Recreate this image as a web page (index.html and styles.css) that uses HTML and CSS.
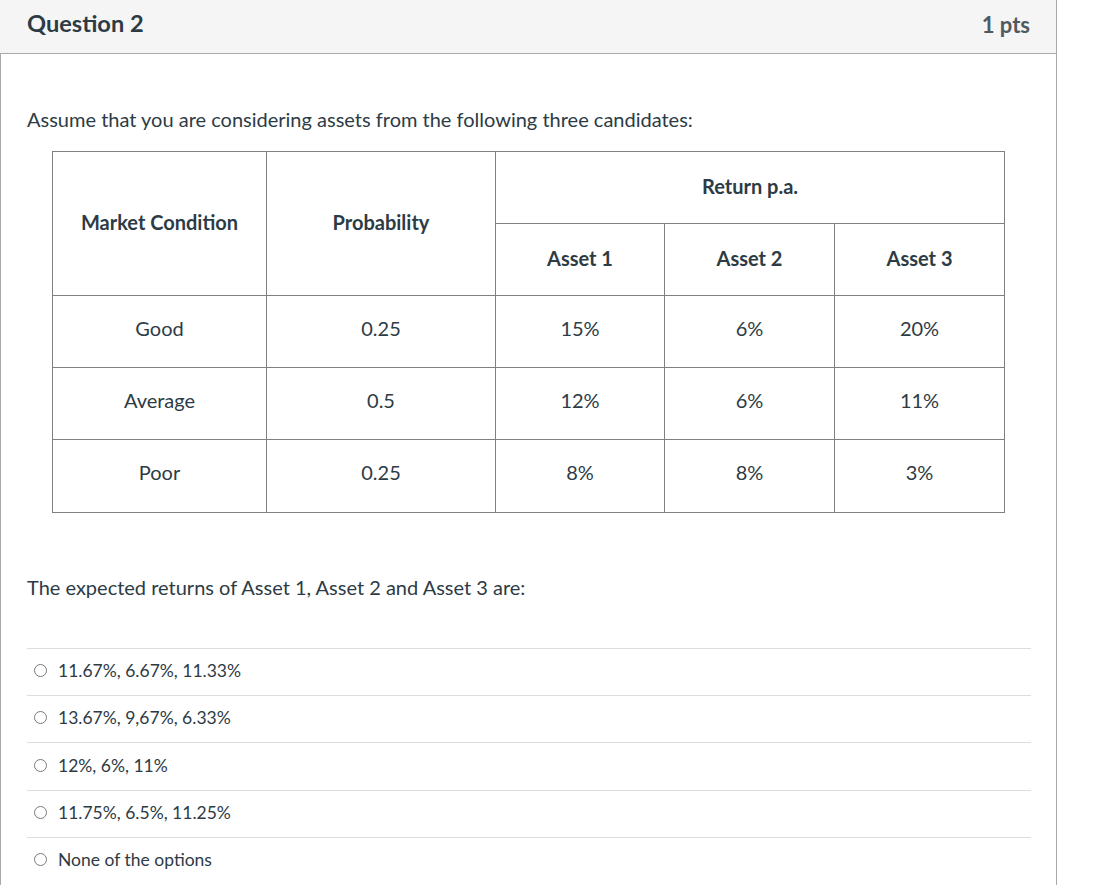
FILE: index.html
```html
<!DOCTYPE html>
<html>
<head>
<meta charset="utf-8">
<link rel="stylesheet" href="styles.css">
</head>
<body>
<div class="question">
  <div class="q-header">
    <span class="q-title">Question 2</span>
    <span class="q-pts">1 pts</span>
  </div>
  <div class="q-body">
    <p class="q-text">Assume that you are considering assets from the following three candidates:</p>
    <table class="data">
      <colgroup>
        <col class="c1"><col class="c2"><col class="c3"><col class="c4"><col class="c5">
      </colgroup>
      <tr>
        <th rowspan="2">Market Condition</th>
        <th rowspan="2">Probability</th>
        <th colspan="3">Return p.a.</th>
      </tr>
      <tr>
        <th>Asset 1</th><th>Asset 2</th><th>Asset 3</th>
      </tr>
      <tr><td>Good</td><td>0.25</td><td>15%</td><td>6%</td><td>20%</td></tr>
      <tr><td>Average</td><td>0.5</td><td>12%</td><td>6%</td><td>11%</td></tr>
      <tr class="last"><td>Poor</td><td>0.25</td><td>8%</td><td>8%</td><td>3%</td></tr>
    </table>
    <p class="q-text q-prompt">The expected returns of Asset 1, Asset 2 and Asset 3 are:</p>
    <div class="answers">
      <div class="answer"><span class="radio"></span><span>11.67%, 6.67%, 11.33%</span></div>
      <div class="answer"><span class="radio"></span><span>13.67%, 9,67%, 6.33%</span></div>
      <div class="answer tall"><span class="radio"></span><span>12%, 6%, 11%</span></div>
      <div class="answer"><span class="radio"></span><span>11.75%, 6.5%, 11.25%</span></div>
      <div class="answer"><span class="radio"></span><span>None of the options</span></div>
    </div>
  </div>
</div>
</body>
</html>
```

FILE: styles.css
```css
html, body {
  margin: 0;
  padding: 0;
  background: #ffffff;
}
body {
  font-family: Lato, "Liberation Sans", sans-serif;
  color: #2d3b45;
}
.question {
  width: 1056px;
  border-right: 1px solid #aaaaaa;
  min-height: 885px;
}
.q-header {
  height: 53px;
  background: #f5f5f5;
  border-bottom: 1px solid #aaaaaa;
  display: flex;
  align-items: center;
  justify-content: space-between;
  padding: 0 26px 0 27px;
  box-sizing: content-box;
}
.q-title {
  font-size: 23.6px;
  font-weight: 700;
  color: #2d3b45;
  margin-bottom: 7px;
}
.q-pts {
  font-size: 22px;
  font-weight: 700;
  color: #4f5a61;
  margin-bottom: 4px;
}
.q-body {
  border-left: 1px solid #aaaaaa;
  padding: 0 25px 0 26px;
  min-height: 831px;
}
.q-text {
  margin: 0;
  font-size: 20px;
  line-height: 28px;
}
.q-body > .q-text:first-child {
  padding-top: 51px;
}
.data {
  border-collapse: collapse;
  table-layout: fixed;
  width: 953px;
  margin: 18px 0 0 25px;
}
.c1 { width: 214px; }
.c2 { width: 229px; }
.c3 { width: 169px; }
.c4 { width: 170px; }
.c5 { width: 170px; }
.data th, .data td {
  border: 1px solid #808080;
  padding: 0;
  text-align: center;
  vertical-align: middle;
  font-size: 20px;
}
.data th {
  font-weight: 700;
  height: 67px;
  padding-bottom: 4px;
}
.data td {
  height: 63px;
  padding-bottom: 8px;
}
.data tr.last td {
  height: 64px;
}
.q-prompt {
  margin-top: 60px;
}
.answers {
  margin-top: 47px;
}
.answer {
  border-top: 1px solid #dddddd;
  height: 47px;
  display: flex;
  align-items: center;
  font-size: 17.5px;
  padding-bottom: 3px;
  box-sizing: border-box;
}
.answer.tall {
  height: 48px;
}
.radio {
  width: 13px;
  height: 13px;
  border: 1.5px solid #7a7a7a;
  border-radius: 50%;
  margin: 0 11px 0 7px;
  box-sizing: border-box;
  flex: none;
}
```
